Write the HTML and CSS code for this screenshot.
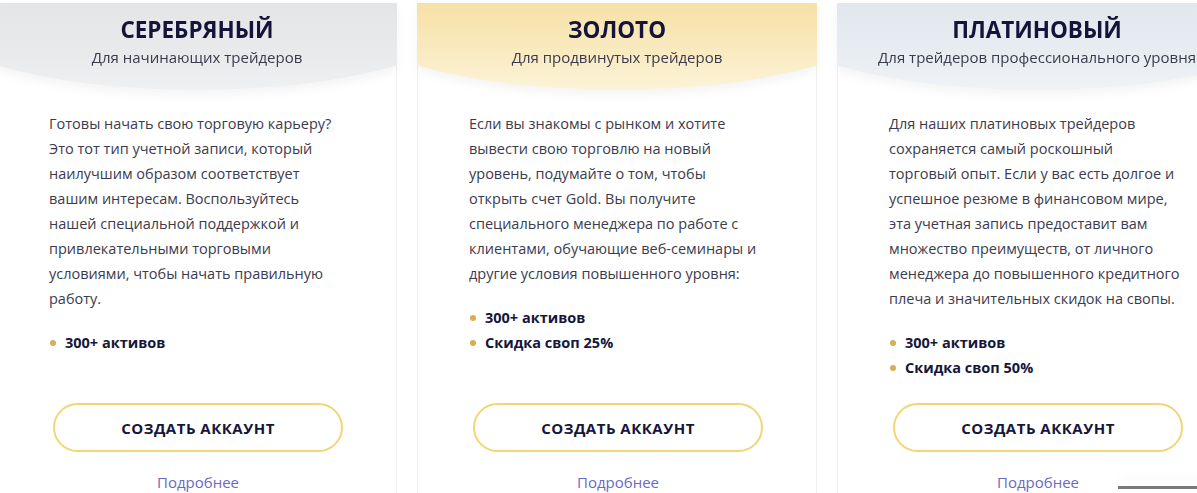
FILE: index.html
```html
<!DOCTYPE html>
<html lang="ru">
<head>
<meta charset="utf-8">
<title>Типы счетов</title>
<link rel="stylesheet" href="styles.css">
</head>
<body>
<div class="plans">
  <section class="card">
    <div class="head-wrap">
      <header class="card-head silver">
        <h2 class="card-title">СЕРЕБРЯНЫЙ</h2>
        <p class="card-sub">Для начинающих трейдеров</p>
      </header>
    </div>
    <div class="card-body">
      <p class="card-text">Готовы начать свою торговую карьеру? Это тот тип учетной записи, который наилучшим образом соответствует вашим интересам. Воспользуйтесь нашей специальной поддержкой и привлекательными торговыми условиями, чтобы начать правильную работу.</p>
      <ul class="features">
        <li>300+ активов</li>
      </ul>
      <a class="btn" href="#">СОЗДАТЬ АККАУНТ</a>
      <a class="more" href="#">Подробнее</a>
    </div>
  </section>
  <section class="card">
    <div class="head-wrap">
      <header class="card-head gold">
        <h2 class="card-title">ЗОЛОТО</h2>
        <p class="card-sub">Для продвинутых трейдеров</p>
      </header>
    </div>
    <div class="card-body">
      <p class="card-text">Если вы знакомы с рынком и хотите вывести свою торговлю на новый уровень, подумайте о том, чтобы открыть счет Gold. Вы получите специального менеджера по работе с клиентами, обучающие веб-семинары и другие условия повышенного уровня:</p>
      <ul class="features">
        <li>300+ активов</li>
        <li>Скидка своп 25%</li>
      </ul>
      <a class="btn" href="#">СОЗДАТЬ АККАУНТ</a>
      <a class="more" href="#">Подробнее</a>
    </div>
  </section>
  <section class="card">
    <div class="head-wrap">
      <header class="card-head platinum">
        <h2 class="card-title">ПЛАТИНОВЫЙ</h2>
        <p class="card-sub">Для трейдеров профессионального уровня</p>
      </header>
    </div>
    <div class="card-body">
      <p class="card-text card-text-wide">Для наших платиновых трейдеров сохраняется самый роскошный<br>торговый опыт. Если у вас есть долгое и успешное резюме в финансовом мире, эта учетная запись предоставит вам множество преимуществ, от личного менеджера до повышенного кредитного плеча и значительных скидок на свопы.</p>
      <ul class="features">
        <li>300+ активов</li>
        <li>Скидка своп 50%</li>
      </ul>
      <a class="btn" href="#">СОЗДАТЬ АККАУНТ</a>
      <a class="more" href="#">Подробнее</a>
    </div>
  </section>
</div>
<div class="widget-edge"></div>
</body>
</html>
```

FILE: styles.css
```css
html, body {
  margin: 0;
  padding: 0;
  background: #ffffff;
  overflow: hidden;
}
body {
  font-family: "Open Sans", "Noto Sans", sans-serif;
  color: #3b3b4d;
  height: 493px;
  position: relative;
}
.plans {
  display: flex;
  gap: 20px;
  padding-top: 3px;
  margin-left: -3px;
}
.card {
  flex: 0 0 400px;
  width: 400px;
  height: 538px;
  box-sizing: border-box;
  border-left: 1px solid #f0f0f0;
  border-right: 1px solid #f0f0f0;
  display: flex;
  flex-direction: column;
}
.head-wrap {
  margin: 0 -1px;
  filter: drop-shadow(0 5px 5px rgba(0, 0, 0, 0.045));
}
.card-head {
  height: 87px;
  text-align: center;
  clip-path: ellipse(72% 100% at 50% 0);
  box-sizing: border-box;
  padding-top: 11px;
}
.silver {
  background: linear-gradient(180deg, #e4e5e7 0%, #e9eaec 60%, #eff0f1 100%);
}
.gold {
  background: linear-gradient(180deg, #f6e1a6 0%, #f9eac0 55%, #fcf3d8 100%);
}
.platinum {
  background: linear-gradient(180deg, #e1e7ed 0%, #e8edf2 60%, #eff3f6 100%);
}
.card-title {
  margin: 0;
  font-size: 22.5px;
  line-height: 32px;
  font-weight: 700;
  color: #14143a;
}
.card-sub {
  margin: 0;
  font-size: 15px;
  line-height: 22px;
  color: #3a3a4c;
}
.card-body {
  flex: 1;
  display: flex;
  flex-direction: column;
  padding: 21px 0 0 51px;
}
.card-text {
  width: 298px;
  margin: 0;
  font-size: 14.5px;
  line-height: 25px;
  color: #3b3b4d;
}
.card-text-wide {
  width: 300px;
}
.features {
  list-style: none;
  margin: 19px 0 0;
  padding: 0;
}
.features li {
  position: relative;
  padding-left: 16px;
  font-size: 14.5px;
  line-height: 25px;
  font-weight: 700;
  color: #16163a;
}
.features li::before {
  content: "";
  position: absolute;
  left: 1px;
  top: 10px;
  width: 6px;
  height: 6px;
  border-radius: 50%;
  background: #d8ad55;
}
.btn {
  margin: auto 0 0 4px;
  width: 290px;
  height: 49px;
  box-sizing: border-box;
  border: 2px solid #f2d675;
  border-radius: 25px;
  display: flex;
  align-items: center;
  justify-content: center;
  font-size: 15px;
  font-weight: 700;
  letter-spacing: 0.5px;
  color: #16163a;
  text-decoration: none;
}
.more {
  display: block;
  width: 298px;
  text-align: center;
  margin-top: 19px;
  margin-bottom: 48px;
  font-size: 15px;
  line-height: 22px;
  color: #6a6ac0;
  text-decoration: none;
}
.widget-edge {
  position: absolute;
  left: 1118px;
  top: 486px;
  width: 90px;
  height: 3px;
  background: #7a7a7a;
  box-shadow: 0 -8px 12px rgba(0, 0, 0, 0.05);
}
```
